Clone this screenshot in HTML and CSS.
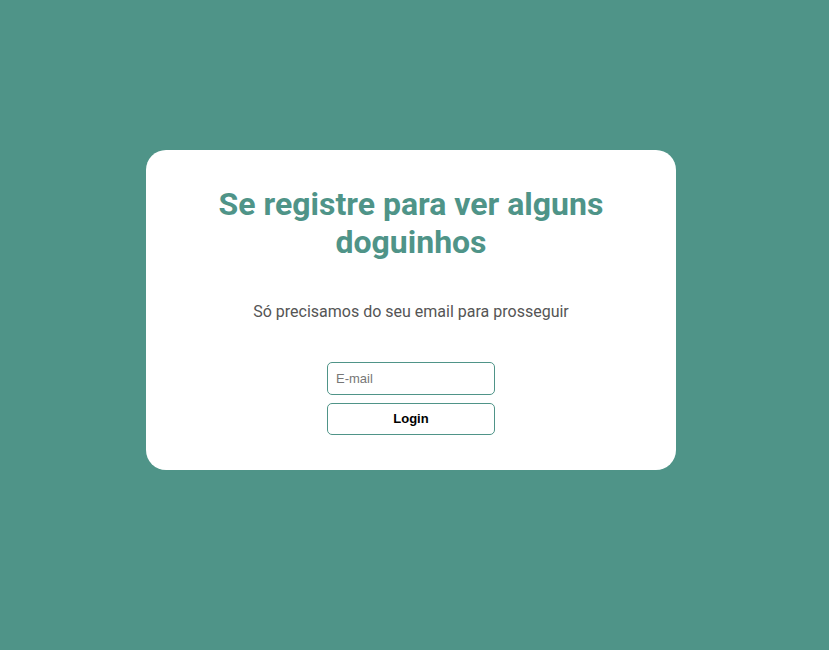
FILE: index.html
```html
<!DOCTYPE html>
<html lang="pt-BR">
<head>
<meta charset="utf-8">
<title>Registro</title>
<link rel="stylesheet" href="styles.css">
</head>
<body>
<main class="page">
  <section class="card">
    <h1 class="title">Se registre para ver alguns doguinhos</h1>
    <p class="subtitle">Só precisamos do seu email para prosseguir</p>
    <form class="form">
      <input class="input" type="email" placeholder="E-mail">
      <button class="button" type="button">Login</button>
    </form>
  </section>
</main>
</body>
</html>
```
FILE: styles.css
```css
html, body {
  margin: 0;
  padding: 0;
  height: 100%;
}
body {
  background: #4f9488;
  font-family: Roboto, "Liberation Sans", sans-serif;
}
.page {
  height: 650px;
  box-sizing: border-box;
  display: flex;
  justify-content: center;
  align-items: flex-start;
  padding: 150px 7px 0 0;
}
.card {
  width: 530px;
  height: 320px;
  box-sizing: border-box;
  background: #fff;
  border-radius: 20px;
  padding: 35px 50px 0;
  display: flex;
  flex-direction: column;
  align-items: center;
}
.title {
  margin: 0;
  font-size: 32px;
  line-height: 38px;
  font-weight: 700;
  color: #4f9488;
  text-align: center;
}
.subtitle {
  margin: 41px 0 0;
  font-size: 16px;
  line-height: 19px;
  color: #555;
  text-align: center;
}
.form {
  margin-top: 41px;
  display: flex;
  flex-direction: column;
  gap: 8px;
}
.input, .button {
  width: 168px;
  box-sizing: border-box;
  border: 1px solid #4f9488;
  border-radius: 5px;
  background: #fff;
  font-family: "Liberation Sans", Arial, sans-serif;
  font-size: 13px;
}
.input {
  height: 33px;
  padding: 0 8px;
  color: #333;
}
.input::placeholder {
  color: #777;
}
.button {
  height: 32px;
  padding: 0 0 2px;
  font-weight: 700;
  color: #000;
}
```
